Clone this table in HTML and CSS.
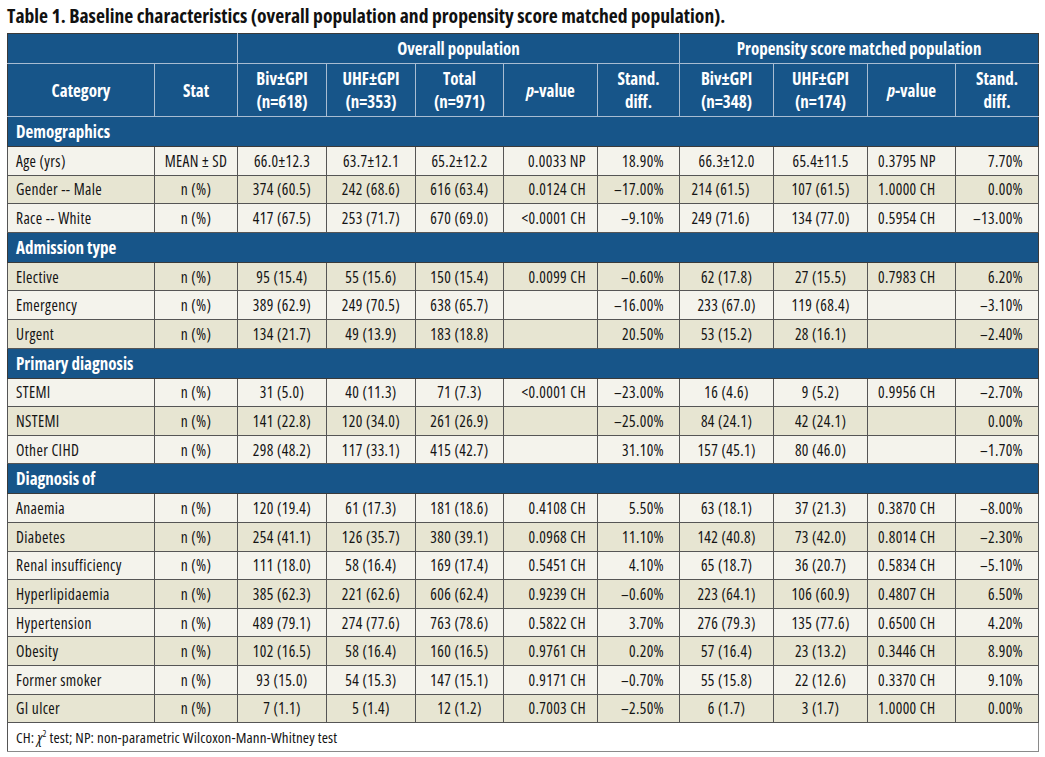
FILE: index.html
```html
<!DOCTYPE html>
<html>
<head>
<meta charset="utf-8">
<link rel="stylesheet" href="styles.css">
</head>
<body>
<div class="page">
  <h1 class="title">Table 1. Baseline characteristics (overall population and propensity score matched population).</h1>
  <table class="tbl">
    <colgroup>
      <col class="c-cat"><col class="c-stat"><col class="c-n"><col class="c-n"><col class="c-t"><col class="c-p"><col class="c-sd"><col class="c-n2"><col class="c-n2"><col class="c-p2"><col class="c-sd2">
    </colgroup>
    <thead>
      <tr class="h1">
        <th colspan="2"></th>
        <th colspan="5">Overall population</th>
        <th colspan="4">Propensity score matched population</th>
      </tr>
      <tr class="h2">
        <th>Category</th>
        <th>Stat</th>
        <th>Biv±GPI<br>(n=618)</th>
        <th>UHF±GPI<br>(n=353)</th>
        <th>Total<br>(n=971)</th>
        <th><i>p</i>-value</th>
        <th>Stand.<br>diff.</th>
        <th>Biv±GPI<br>(n=348)</th>
        <th>UHF±GPI<br>(n=174)</th>
        <th><i>p</i>-value</th>
        <th>Stand.<br>diff.</th>
      </tr>
    </thead>
    <tbody>
      <tr class="sec"><td colspan="11">Demographics</td></tr>
      <tr class="lt"><td>Age (yrs)</td><td>MEAN ± SD</td><td>66.0±12.3</td><td>63.7±12.1</td><td>65.2±12.2</td><td>0.0033 NP</td><td>18.90%</td><td>66.3±12.0</td><td>65.4±11.5</td><td>0.3795 NP</td><td>7.70%</td></tr>
      <tr class="dk"><td>Gender -- Male</td><td>n (%)</td><td>374 (60.5)</td><td>242 (68.6)</td><td>616 (63.4)</td><td>0.0124 CH</td><td>–17.00%</td><td class="shift">214 (61.5)</td><td>107 (61.5)</td><td>1.0000 CH</td><td>0.00%</td></tr>
      <tr class="lt"><td>Race -- White</td><td>n (%)</td><td>417 (67.5)</td><td>253 (71.7)</td><td>670 (69.0)</td><td>&lt;0.0001 CH</td><td>–9.10%</td><td class="shift">249 (71.6)</td><td>134 (77.0)</td><td>0.5954 CH</td><td>–13.00%</td></tr>
      <tr class="sec"><td colspan="11">Admission type</td></tr>
      <tr class="dk"><td>Elective</td><td>n (%)</td><td>95 (15.4)</td><td>55 (15.6)</td><td>150 (15.4)</td><td>0.0099 CH</td><td>–0.60%</td><td>62 (17.8)</td><td>27 (15.5)</td><td>0.7983 CH</td><td>6.20%</td></tr>
      <tr class="lt"><td>Emergency</td><td>n (%)</td><td>389 (62.9)</td><td>249 (70.5)</td><td>638 (65.7)</td><td></td><td>–16.00%</td><td>233 (67.0)</td><td>119 (68.4)</td><td></td><td>–3.10%</td></tr>
      <tr class="dk"><td>Urgent</td><td>n (%)</td><td>134 (21.7)</td><td>49 (13.9)</td><td>183 (18.8)</td><td></td><td>20.50%</td><td>53 (15.2)</td><td>28 (16.1)</td><td></td><td>–2.40%</td></tr>
      <tr class="sec"><td colspan="11">Primary diagnosis</td></tr>
      <tr class="lt"><td>STEMI</td><td>n (%)</td><td>31 (5.0)</td><td>40 (11.3)</td><td>71 (7.3)</td><td>&lt;0.0001 CH</td><td>–23.00%</td><td>16 (4.6)</td><td>9 (5.2)</td><td>0.9956 CH</td><td>–2.70%</td></tr>
      <tr class="dk"><td>NSTEMI</td><td>n (%)</td><td>141 (22.8)</td><td>120 (34.0)</td><td>261 (26.9)</td><td></td><td>–25.00%</td><td>84 (24.1)</td><td>42 (24.1)</td><td></td><td>0.00%</td></tr>
      <tr class="lt"><td>Other CIHD</td><td>n (%)</td><td>298 (48.2)</td><td>117 (33.1)</td><td>415 (42.7)</td><td></td><td>31.10%</td><td>157 (45.1)</td><td>80 (46.0)</td><td></td><td>–1.70%</td></tr>
      <tr class="sec"><td colspan="11">Diagnosis of</td></tr>
      <tr class="lt"><td>Anaemia</td><td>n (%)</td><td>120 (19.4)</td><td>61 (17.3)</td><td>181 (18.6)</td><td>0.4108 CH</td><td>5.50%</td><td>63 (18.1)</td><td>37 (21.3)</td><td>0.3870 CH</td><td>–8.00%</td></tr>
      <tr class="dk"><td>Diabetes</td><td>n (%)</td><td>254 (41.1)</td><td>126 (35.7)</td><td>380 (39.1)</td><td>0.0968 CH</td><td>11.10%</td><td>142 (40.8)</td><td>73 (42.0)</td><td>0.8014 CH</td><td>–2.30%</td></tr>
      <tr class="lt"><td>Renal insufficiency</td><td>n (%)</td><td>111 (18.0)</td><td>58 (16.4)</td><td>169 (17.4)</td><td>0.5451 CH</td><td>4.10%</td><td>65 (18.7)</td><td>36 (20.7)</td><td>0.5834 CH</td><td>–5.10%</td></tr>
      <tr class="dk"><td>Hyperlipidaemia</td><td>n (%)</td><td>385 (62.3)</td><td>221 (62.6)</td><td>606 (62.4)</td><td>0.9239 CH</td><td>–0.60%</td><td>223 (64.1)</td><td>106 (60.9)</td><td>0.4807 CH</td><td>6.50%</td></tr>
      <tr class="lt"><td>Hypertension</td><td>n (%)</td><td>489 (79.1)</td><td>274 (77.6)</td><td>763 (78.6)</td><td>0.5822 CH</td><td>3.70%</td><td>276 (79.3)</td><td>135 (77.6)</td><td>0.6500 CH</td><td>4.20%</td></tr>
      <tr class="dk"><td>Obesity</td><td>n (%)</td><td>102 (16.5)</td><td>58 (16.4)</td><td>160 (16.5)</td><td>0.9761 CH</td><td>0.20%</td><td>57 (16.4)</td><td>23 (13.2)</td><td>0.3446 CH</td><td>8.90%</td></tr>
      <tr class="lt"><td>Former smoker</td><td>n (%)</td><td>93 (15.0)</td><td>54 (15.3)</td><td>147 (15.1)</td><td>0.9171 CH</td><td>–0.70%</td><td>55 (15.8)</td><td>22 (12.6)</td><td>0.3370 CH</td><td>9.10%</td></tr>
      <tr class="dk"><td>GI ulcer</td><td>n (%)</td><td>7 (1.1)</td><td>5 (1.4)</td><td>12 (1.2)</td><td>0.7003 CH</td><td>–2.50%</td><td>6 (1.7)</td><td>3 (1.7)</td><td>1.0000 CH</td><td>0.00%</td></tr>
    </tbody>
    <tfoot>
      <tr class="foot"><td colspan="11">CH: <i>χ</i><sup>2</sup> test; NP: non-parametric Wilcoxon-Mann-Whitney test</td></tr>
    </tfoot>
  </table>
</div>
</body>
</html>
```
FILE: styles.css
```css
html, body {
  margin: 0;
  padding: 0;
  background: #ffffff;
}
body {
  font-family: "Open Sans", "DejaVu Sans Condensed", sans-serif;
  font-stretch: 75%;
  color: #141414;
}
.page {
  padding: 5px 7px 0 7px;
}
.title {
  margin: 0 0 6px 0;
  font-size: 19.6px;
  font-weight: bold;
  line-height: 22px;
  color: #111;
}
.tbl {
  border-collapse: collapse;
  table-layout: fixed;
  width: 1031px;
  border: 1px solid #3a3a3a;
  font-size: 15.5px;
  letter-spacing: 0.35px;
}
.c-cat { width: 147px; }
.c-stat { width: 83px; }
.c-n { width: 89px; }
.c-t { width: 88px; }
.c-p { width: 94px; }
.c-sd { width: 82px; }
.c-n2 { width: 94px; }
.c-p2 { width: 88px; }
.c-sd2 { width: 83px; }

.tbl thead th {
  background: #175589;
  color: #ffffff;
  font-weight: bold;
  font-size: 17px;
  letter-spacing: 0;
  line-height: 23px;
  text-align: center;
  padding: 0 4px;
  border: 1px solid #a8bcd2;
}
.tbl thead tr.h1 th {
  height: 29px;
  border-top: 1px solid #3a3a3a;
}
.tbl thead tr.h1 th:first-child { border-left: 1px solid #3a3a3a; }
.tbl thead tr.h1 th:last-child,
.tbl thead tr.h2 th:last-child { border-right: 1px solid #3a3a3a; }
.tbl thead tr.h2 th:first-child { border-left: 1px solid #3a3a3a; }
.tbl thead tr.h2 th {
  height: 52px;
}
.tbl thead i { font-weight: bold; }

.tbl tbody tr.sec td {
  background: #175589;
  color: #ffffff;
  font-weight: bold;
  font-size: 17px;
  letter-spacing: 0;
  height: 29px;
  padding: 0 8px;
  text-align: left;
  border: 1px solid #3a3a3a;
  border-top-color: #a8bcd2;
}
.tbl tbody tr.lt td { background: #f4f3ec; }
.tbl tbody tr.dk td { background: #e7e5d2; }
.tbl tbody tr.lt td,
.tbl tbody tr.dk td {
  height: 27.6px;
  padding: 0 8px;
  border: 1px solid #555555;
  text-align: center;
  white-space: nowrap;
}
.tbl tbody tr td:nth-child(1) { text-align: left; }
.tbl tbody tr td:nth-child(6) { text-align: right; padding-right: 11px; }
.tbl tbody tr td:nth-child(7) { text-align: right; padding-right: 15px; }
.tbl tbody tr td:nth-child(10) { text-align: left; padding-left: 10px; }
.tbl tbody tr td:nth-child(11) { text-align: right; padding-right: 15px; }
.tbl tbody tr.sec td:nth-child(1) { text-align: left; }
.tbl tbody tr td.shift { padding-right: 20px; }

.tbl tfoot td {
  background: #ffffff;
  height: 28px;
  padding: 0 8px;
  font-size: 15px;
  letter-spacing: 0.15px;
  border: 1px solid #555555;
  border-right-color: #8a8a8a;
  border-bottom-color: #8a8a8a;
}
.tbl tfoot sup {
  font-size: 9px;
  line-height: 0;
}
```
